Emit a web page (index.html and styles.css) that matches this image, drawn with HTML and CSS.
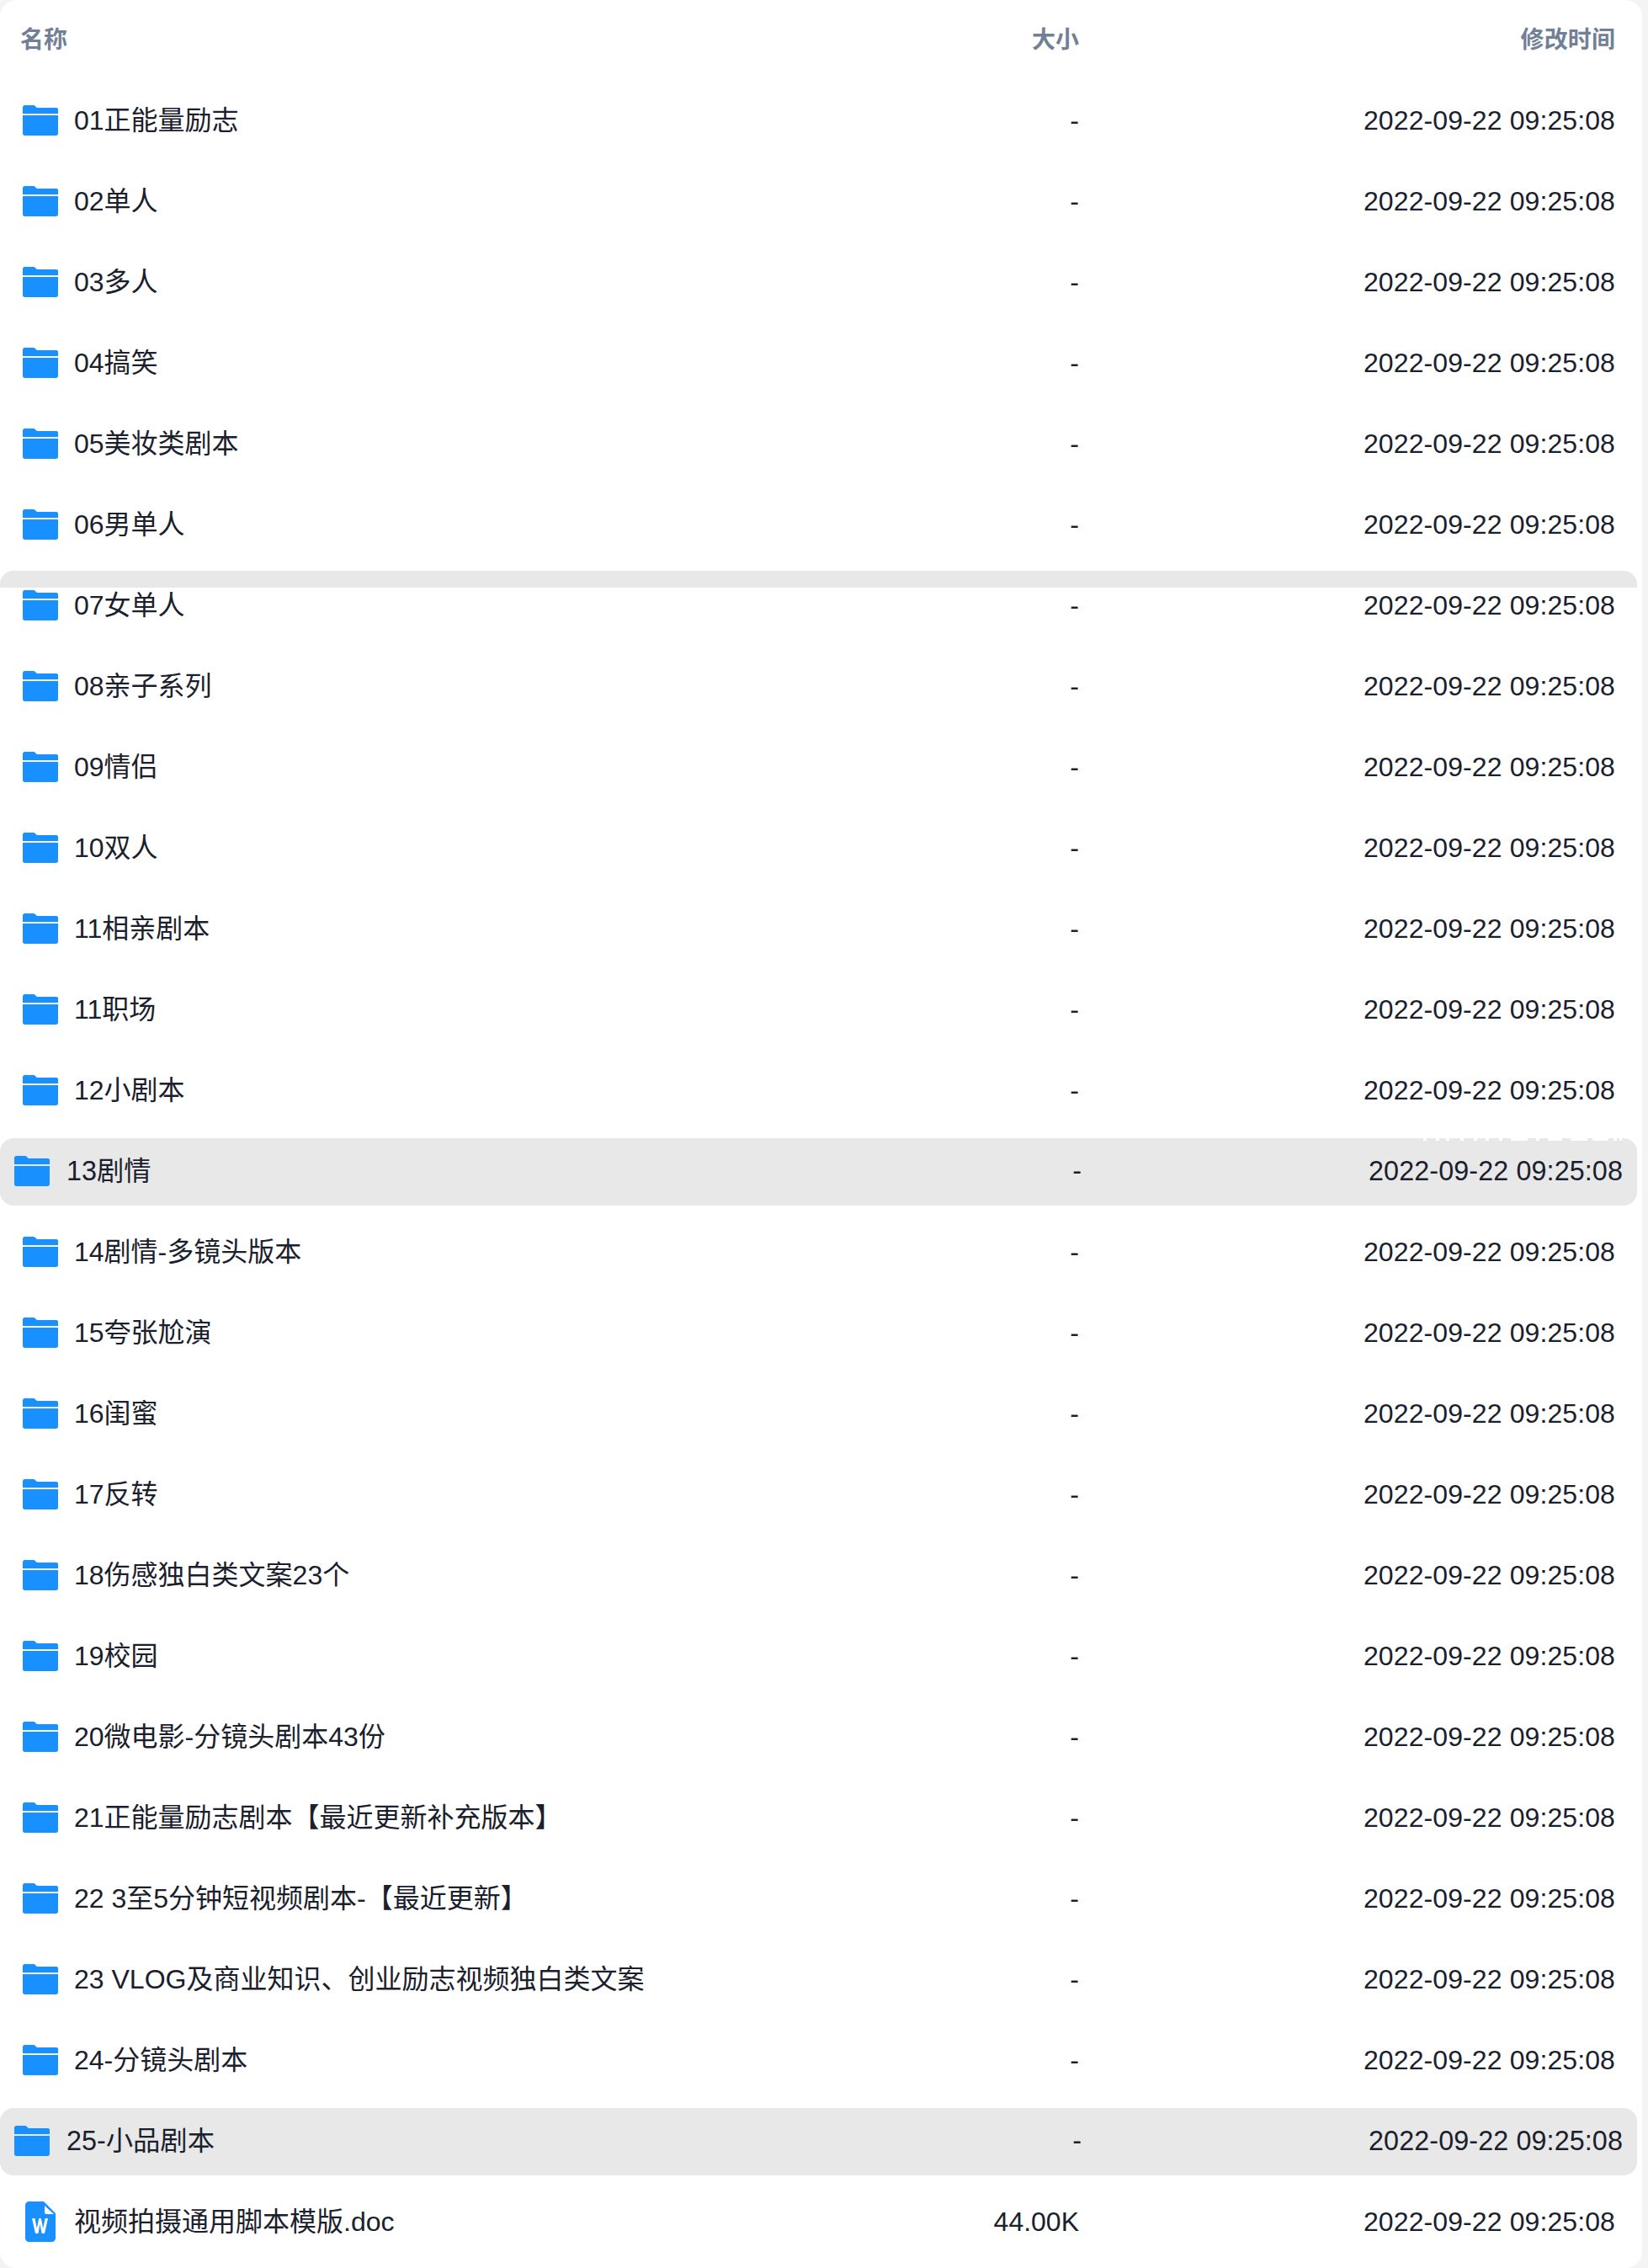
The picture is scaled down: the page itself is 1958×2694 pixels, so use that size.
FILE: index.html
```html
<!DOCTYPE html>
<html>
  <head>
    <meta charset="UTF-8">
    <title>文件列表</title>
    <link rel="stylesheet" href="styles.css">
  </head>
  <body>
    <svg style="display:none;">
      <symbol id="folder" viewBox="0 0 48 48">
        <path d="M3 16V8.500C3 7.100 4.100 6 5.500 6H15.800C16.600 6 17.300 6.300 17.800 6.900L19.800 9H43C44.100 9 45 9.900 45 11V16Z"/>
        <path d="M3 18H45V39.500C45 40.900 43.900 42 42.500 42H5.500C4.100 42 3 40.900 3 39.500Z"/>
      </symbol>
      <symbol id="word" viewBox="0 0 48 48">
        <path fill-rule="evenodd" d="M10.500 0H28L42 14V43.500C42 46 40 48 37.500 48H10.500C8 48 6 46 6 43.500V4.500C6 2 8 0 10.500 0ZM29 5V13C29 14.100 29.900 15 31 15H40ZM14 20H17.400L19.800 32L22.200 20H24.800L27.200 32L29.600 20H33L29 38H25.600L23.500 27L21.400 38H18Z"/>
      </symbol>
    </svg>
    <div class="card">
      <div class="row head">
        <div class="name">名称</div>
        <div class="size">大小</div>
        <div class="time">修改时间</div>
      </div>
      <div class="row"><div class="name"><svg class="icon"><use href="#folder"/></svg>01正能量励志</div><div class="size">-</div><div class="time">2022-09-22 09:25:08</div></div>
      <div class="row"><div class="name"><svg class="icon"><use href="#folder"/></svg>02单人</div><div class="size">-</div><div class="time">2022-09-22 09:25:08</div></div>
      <div class="row"><div class="name"><svg class="icon"><use href="#folder"/></svg>03多人</div><div class="size">-</div><div class="time">2022-09-22 09:25:08</div></div>
      <div class="row"><div class="name"><svg class="icon"><use href="#folder"/></svg>04搞笑</div><div class="size">-</div><div class="time">2022-09-22 09:25:08</div></div>
      <div class="row"><div class="name"><svg class="icon"><use href="#folder"/></svg>05美妆类剧本</div><div class="size">-</div><div class="time">2022-09-22 09:25:08</div></div>
      <div class="row"><div class="name"><svg class="icon"><use href="#folder"/></svg>06男单人</div><div class="size">-</div><div class="time">2022-09-22 09:25:08</div></div>
      <div class="row seam"><div class="name"><svg class="icon"><use href="#folder"/></svg>07女单人</div><div class="size">-</div><div class="time">2022-09-22 09:25:08</div></div>
      <div class="row"><div class="name"><svg class="icon"><use href="#folder"/></svg>08亲子系列</div><div class="size">-</div><div class="time">2022-09-22 09:25:08</div></div>
      <div class="row"><div class="name"><svg class="icon"><use href="#folder"/></svg>09情侣</div><div class="size">-</div><div class="time">2022-09-22 09:25:08</div></div>
      <div class="row"><div class="name"><svg class="icon"><use href="#folder"/></svg>10双人</div><div class="size">-</div><div class="time">2022-09-22 09:25:08</div></div>
      <div class="row"><div class="name"><svg class="icon"><use href="#folder"/></svg>11相亲剧本</div><div class="size">-</div><div class="time">2022-09-22 09:25:08</div></div>
      <div class="row"><div class="name"><svg class="icon"><use href="#folder"/></svg>11职场</div><div class="size">-</div><div class="time">2022-09-22 09:25:08</div></div>
      <div class="row"><div class="name"><svg class="icon"><use href="#folder"/></svg>12小剧本</div><div class="size">-</div><div class="time">2022-09-22 09:25:08</div></div>
      <div class="row active ghosted">
        <svg class="ghost" viewBox="0 0 236 3">
          <path d="M0 0h4v3H0zM15 0h4v3h-4zM27 0h4v3h-4zM44 0h4v3h-4zM60 0h4v3h-4zM74 0h4v3h-4zM90 0h4v3h-4zM104 0h20v3h-20zM134 0h4v3h-4zM148 0h17v3h-17zM175 0h20v3h-20zM201 0h19v3h-19zM226 0h4v3h-4zM233 0h3v3h-3z"/>
        </svg>
        <div class="name"><svg class="icon"><use href="#folder"/></svg>13剧情</div><div class="size">-</div><div class="time">2022-09-22 09:25:08</div>
      </div>
      <div class="row"><div class="name"><svg class="icon"><use href="#folder"/></svg>14剧情-多镜头版本</div><div class="size">-</div><div class="time">2022-09-22 09:25:08</div></div>
      <div class="row"><div class="name"><svg class="icon"><use href="#folder"/></svg>15夸张尬演</div><div class="size">-</div><div class="time">2022-09-22 09:25:08</div></div>
      <div class="row"><div class="name"><svg class="icon"><use href="#folder"/></svg>16闺蜜</div><div class="size">-</div><div class="time">2022-09-22 09:25:08</div></div>
      <div class="row"><div class="name"><svg class="icon"><use href="#folder"/></svg>17反转</div><div class="size">-</div><div class="time">2022-09-22 09:25:08</div></div>
      <div class="row"><div class="name"><svg class="icon"><use href="#folder"/></svg>18伤感独白类文案23个</div><div class="size">-</div><div class="time">2022-09-22 09:25:08</div></div>
      <div class="row"><div class="name"><svg class="icon"><use href="#folder"/></svg>19校园</div><div class="size">-</div><div class="time">2022-09-22 09:25:08</div></div>
      <div class="row"><div class="name"><svg class="icon"><use href="#folder"/></svg>20微电影-分镜头剧本43份</div><div class="size">-</div><div class="time">2022-09-22 09:25:08</div></div>
      <div class="row"><div class="name"><svg class="icon"><use href="#folder"/></svg>21正能量励志剧本【最近更新补充版本】</div><div class="size">-</div><div class="time">2022-09-22 09:25:08</div></div>
      <div class="row"><div class="name"><svg class="icon"><use href="#folder"/></svg>22 3至5分钟短视频剧本-【最近更新】</div><div class="size">-</div><div class="time">2022-09-22 09:25:08</div></div>
      <div class="row"><div class="name"><svg class="icon"><use href="#folder"/></svg>23 VLOG及商业知识、创业励志视频独白类文案</div><div class="size">-</div><div class="time">2022-09-22 09:25:08</div></div>
      <div class="row"><div class="name"><svg class="icon"><use href="#folder"/></svg>24-分镜头剧本</div><div class="size">-</div><div class="time">2022-09-22 09:25:08</div></div>
      <div class="row active"><div class="name"><svg class="icon"><use href="#folder"/></svg>25-小品剧本</div><div class="size">-</div><div class="time">2022-09-22 09:25:08</div></div>
      <div class="row"><div class="name"><svg class="icon"><use href="#word"/></svg>视频拍摄通用脚本模版.doc</div><div class="size">44.00K</div><div class="time">2022-09-22 09:25:08</div></div>
    </div>
  </body>
</html>
```

FILE: styles.css
```css
* {
  box-sizing: border-box;
}

html, body {
  margin: 0;
  background-color: #f4f4f5;
}

body {
  font-family: "Liberation Sans", "Noto Sans CJK SC", sans-serif;
  font-size: 32px;
  line-height: 46px;
  color: #1a202c;
}

.card {
  width: 1951px;
  height: 2694px;
  background-color: #fff;
  border-radius: 20px;
  overflow: hidden;
}

.row {
  display: grid;
  grid-template-columns: 1fr 160px 637px;
  align-items: center;
  height: 96px;
  padding: 0 32px 3px 24px;
}

.head {
  padding-bottom: 0;
  font-size: 28px;
  font-weight: bold;
  color: #718096;
}

.name {
  display: flex;
  align-items: center;
}

.size, .time {
  text-align: right;
}

.time {
  letter-spacing: 0.1px;
}

.icon {
  width: 48px;
  height: 48px;
  margin-right: 16px;
  fill: #1890ff;
}

.active {
  grid-template-columns: 1fr 160px 643px;
  width: 1945px;
  height: 80px;
  margin: 8px 0;
  padding: 0 17px 3px 14px;
  font-size: 32.32px;
  background-color: #e8e8e9;
  border-radius: 16px;
}

.active .icon {
  margin-right: 17px;
}

/* stitched capture leaves a strip of the highlight over this row */
.seam {
  position: relative;
}

.seam::before {
  content: "";
  position: absolute;
  top: 6px;
  left: 0;
  width: 1945px;
  height: 20px;
  background-color: #e8e8e9;
  border-radius: 16px 16px 0 0;
}

.ghosted {
  position: relative;
}

/* bottom edge of a white watermark caught by the top of the row */
.ghost {
  position: absolute;
  top: 0;
  right: 18px;
  width: 236px;
  height: 3px;
  fill: #fff;
}
```
